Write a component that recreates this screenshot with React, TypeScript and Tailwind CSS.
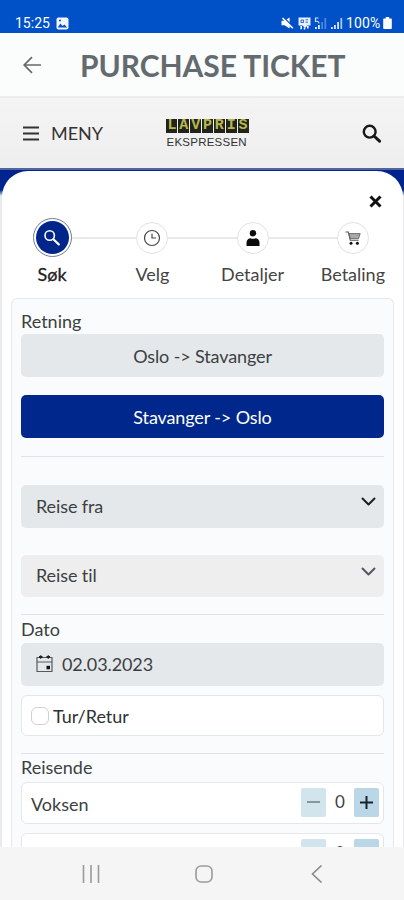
import { useState } from 'react';

const STEPS = [
  { label: 'Søk', icon: SearchIcon },
  { label: 'Velg', icon: ClockIcon },
  { label: 'Detaljer', icon: PersonIcon },
  { label: 'Betaling', icon: CartIcon }
];

const DIRECTIONS = ['Oslo -> Stavanger', 'Stavanger -> Oslo'];

function SearchIcon() {
  return (
    <svg width="18" height="18" viewBox="0 0 18 18" fill="none" stroke="#fff">
      <circle cx="6.7" cy="6.5" r="4.7" strokeWidth="1.6" />
      <path d="M10.4 10.2l5.4 5.2" strokeWidth="2.2" strokeLinecap="round" />
    </svg>
  );
}

function ClockIcon() {
  return (
    <svg width="18" height="18" viewBox="0 0 18 18" fill="none" stroke="#444">
      <circle cx="9" cy="9" r="7.5" strokeWidth="1.2" />
      <path d="M9 4.8V9h4" strokeWidth="1.2" />
    </svg>
  );
}

function PersonIcon() {
  return (
    <svg width="16" height="18" viewBox="0 0 16 18" fill="#0c0c0c">
      <circle cx="8" cy="4.2" r="3.2" />
      <path d="M1.5 17v-3.2c0-3 2-4.6 4-4.6 1.6.7 3.4.7 5 0 2 0 4 1.6 4 4.6V17z" />
    </svg>
  );
}

function CartIcon() {
  return (
    <svg width="16" height="16" viewBox="0 0 16 16" fill="none" stroke="#555">
      <path d="M.5 2h2.8l2 8.3h8.2" strokeWidth="1.1" />
      <path d="M4 3.6h11.2l-1.7 5H5.2z" strokeWidth=".8" fill="#aaa" />
      <circle cx="6" cy="13.2" r="1.5" fill="#111" stroke="none" />
      <circle cx="12.4" cy="13.2" r="1.5" fill="#111" stroke="none" />
    </svg>
  );
}

function StatusBar() {
  return (
    <div className="flex h-[33px] shrink-0 items-end justify-between bg-[#0050c8] pr-3 pb-[3px] pl-[15px] font-[Roboto,sans-serif] text-[14px] leading-[14px] text-white">
      <div className="flex h-[14px] items-center gap-[5px]">
        <span className="w-9">15:25</span>
        <svg width="13" height="13" viewBox="0 0 13 13">
          <rect x=".5" y=".5" width="12" height="12" rx="2" fill="#f2f6ff" />
          <path d="M1.8 10.5l2.6-4 2.2 2.6 1.8-1.6 2.8 3z" fill="#0050c8" />
          <circle cx="4" cy="3.6" r="1" fill="#0050c8" />
        </svg>
      </div>
      <div className="flex h-[14px] items-center">
        <svg width="13" height="12" viewBox="0 0 13 12">
          <path d="M.5 3.700h3L8.600.5v11L3.500 8.300h-3z" fill="#fff" />
          <path d="M2.500.3l10 10" stroke="#0050c8" strokeWidth="1.400" />
          <path d="M1.500 1l10.300 10.300" stroke="#fff" strokeWidth="1.600" />
        </svg>
        <svg className="ml-[4px]" width="13" height="13" viewBox="0 0 13 13">
          <path d="M.5.5h12V8.500H9.500L7 11 4.500 8.500h-4z" fill="#e8f0ff" />
          <path d="M3 3h2.500v2.500H3zM7.500 2.800H10M7.500 5.200H10" stroke="#0050c8" strokeWidth=".8" fill="none" />
          <path d="M3.200 9v3.200M9.800 9v2.500M6.500 10.500v2" stroke="#fff" strokeWidth="1.600" />
        </svg>
        <svg className="ml-[3px]" width="13" height="12" viewBox="0 0 13 12">
          <path d="M4.500 1H1.500v3.500c2.500-.8 3.500.5 3.200 2" stroke="#cfe0fb" strokeWidth="1.200" fill="none" />
          <path d="M1 10h1.800v2H1zM4 8h1.800v4H4z" fill="#e5eeff" />
          <path d="M7.200 5H9v7H7.200zM10.400 1h1.800v11h-1.800z" fill="#4c86dc" />
        </svg>
        <svg className="ml-[3px]" width="13" height="12" viewBox="0 0 13 12">
          <path d="M1 10h1.800v2H1zM4 8h1.800v4H4zM7.200 5H9v7H7.200z" fill="#dce8ff" />
          <path d="M10.400 1h1.800v11h-1.800z" fill="#a9c6f2" />
        </svg>
        <span className="ml-[3px] w-[37px] text-[14px] tracking-[0.100px]">100%</span>
        <svg width="9" height="12" viewBox="0 0 9 12" fill="#fff">
          <path d="M2.800 0h3.400v1.400H8a.8.8 0 0 1 .8.8v9a.8.8 0 0 1-.8.800H1a.8.8 0 0 1-.8-.8v-9a.8.8 0 0 1 .8-.8h1.800z" />
        </svg>
      </div>
    </div>
  );
}

function Logo() {
  return (
    <div className="w-[82px]">
      <div className="flex gap-px">
        {'LAVPRIS'.split('').map((letter, i) => (
          <span
            key={i}
            className="flex h-[14px] min-w-0 flex-1 items-center justify-center bg-[#22231b] font-['Liberation_Mono',monospace] text-[15px] leading-[14px] font-bold text-[#b5b650]"
          >
            {letter}
          </span>
        ))}
      </div>
      <div className="mt-[3px] font-['Liberation_Sans',sans-serif] text-[11.5px] leading-[12px] tracking-[0.240px] whitespace-nowrap text-[#333]">
        EKSPRESSEN
      </div>
    </div>
  );
}

function Steps() {
  return (
    <div className="relative mt-[6px] h-[83px]">
      <div className="absolute top-[22px] right-[50px] left-[50px] h-[2px] bg-[#e9e9eb]" />
      <div className="relative grid grid-cols-4">
        {STEPS.map(({ label, icon: Icon }, i) => (
          <div key={label} className="flex flex-col items-center">
            <div className="flex h-[45px] items-center justify-center">
              {i === 0 ? (
                <div className="flex size-[39px] items-center justify-center rounded-full border border-[#6c7c9c] bg-white">
                  <div className="flex size-[33px] items-center justify-center rounded-full bg-[#00268c]">
                    <Icon />
                  </div>
                </div>
              ) : (
                <div className="flex size-[32px] items-center justify-center rounded-full border border-[#e2e2e4] bg-white">
                  <Icon />
                </div>
              )}
            </div>
            <span className={`mt-[3px] text-[18px] leading-[22px] ${i === 0 ? 'text-[#222] [-webkit-text-stroke:0.3px_#222]' : 'text-[#444]'}`}>
              {label}
            </span>
          </div>
        ))}
      </div>
    </div>
  );
}

function Chevron({ color }: { color: string }) {
  return (
    <svg className="mb-[7px]" width="15" height="10" viewBox="0 0 15 10" fill="none" stroke={color} strokeWidth="2">
      <path d="M1.500 1.500l6 6 6-6" strokeLinecap="round" strokeLinejoin="round" />
    </svg>
  );
}

function PassengerRow({ label }: { label: string }) {
  const [count, setCount] = useState(0);

  return (
    <div className="flex h-[42px] shrink-0 items-center rounded-md border border-[#e4e7ea] bg-white pr-[4px] pl-[9px]">
      <span className="flex-1 pt-[2px]">{label}</span>
      <div className="mb-[2px] flex items-center">
        <button
          onClick={() => setCount(Math.max(0, count - 1))}
          className="flex h-[29px] w-[25px] items-center justify-center rounded-xs bg-[#d3e5ec]"
        >
          <span className="h-[2px] w-[13px] bg-[#84979f]" />
        </button>
        <span className="w-[28px] pb-px text-center text-[17px]">{count}</span>
        <button
          onClick={() => setCount(count + 1)}
          className="flex h-[29px] w-[25px] items-center justify-center rounded-xs bg-[#bbd6e6]"
        >
          <svg width="13" height="13" viewBox="0 0 13 13" stroke="#17242c" strokeWidth="2">
            <path d="M0 6.500h13M6.500 0v13" />
          </svg>
        </button>
      </div>
    </div>
  );
}

export default function App() {
  const [direction, setDirection] = useState(DIRECTIONS[1]);
  const [roundTrip, setRoundTrip] = useState(false);

  return (
    <div className="flex h-[900px] w-[404px] flex-col overflow-hidden bg-[#f5f5f5] font-[Lato,sans-serif] text-[18px] leading-[22px] text-[#3c3f42] [font-variant-ligatures:none]">
      <StatusBar />

      <header className="flex h-[65px] shrink-0 items-center border-b-2 border-[#ececec] bg-[#fbfcfc] pl-[23px]">
        <svg width="18" height="18" viewBox="0 0 18 18" fill="none" stroke="#646a6d" strokeWidth="1.700">
          <path d="M18 9H1.500M9 1.200L1.200 9 9 16.800" />
        </svg>
        <h1 className="ml-[39px] text-[30px] leading-[34px] font-bold tracking-[-0.050px] whitespace-nowrap text-[#646b6f]">
          PURCHASE TICKET
        </h1>
      </header>

      <nav className="grid h-[72px] shrink-0 grid-cols-3 items-center border-b-2 border-[#53659d] bg-linear-to-b from-[#f4f4f4] to-[#eeeeee] px-[23px]">
        <div className="flex items-center">
          <svg width="16" height="15" viewBox="0 0 16 15" fill="#333">
            <path d="M0 .5h16v2H0zM0 6.500h16v2H0zM0 12.500h16v2H0z" />
          </svg>
          <span className="ml-[12px] text-[18px] text-[#333]">MENY</span>
        </div>
        <div className="flex justify-center pl-[11px]">
          <Logo />
        </div>
        <svg className="justify-self-end" width="19" height="19" viewBox="0 0 19 19" fill="none" stroke="#181818">
          <circle cx="7.700" cy="7.700" r="5.900" strokeWidth="2.400" />
          <path d="M12 12l5.500 5.200" strokeWidth="3" strokeLinecap="round" />
        </svg>
      </nav>

      <div className="h-[677px] shrink-0 overflow-hidden bg-linear-to-b from-[#00248e] from-[20px] to-[#e9ebef] to-[26px] pt-px pr-px pl-[2px]">
        <main className="flex h-full flex-col rounded-t-[26px] bg-white pt-[24px]">
          <button className="mr-[21px] self-end">
            <svg width="13" height="13" viewBox="0 0 13 13" stroke="#111" strokeWidth="3">
              <path d="M1.500 1.500l10 10M11.500 1.500l-10 10" />
            </svg>
          </button>

          <div className="pt-px">
            <Steps />
          </div>

          <section className="mr-[9px] ml-[9px] flex min-h-0 flex-1 flex-col rounded-t-md border border-b-0 border-[#e5e7e9] bg-[#f9fbfc] px-[9px] pt-[11px]">
            <label>Retning</label>
            {DIRECTIONS.map(item => (
              <button
                key={item}
                onClick={() => setDirection(item)}
                className={`h-[43px] shrink-0 rounded-[5px] tracking-[-0.120px] first-of-type:mt-[2px] not-first-of-type:mt-[18px] ${
                  item === direction ? 'bg-[#00288c] text-white' : 'bg-[#e4e8eb]'
                }`}
              >
                {item}
              </button>
            ))}
            <hr className="mt-[18px] border-[#dde3e8]" />

            <div className="mt-[28px] flex h-[43px] shrink-0 items-center justify-between rounded-[5px] bg-[#e4e8eb] pr-[8px] pb-[2px] pl-[15px] tracking-[-0.100px]">
              Reise fra
              <Chevron color="#1d2022" />
            </div>
            <div className="mt-[27px] flex h-[42px] shrink-0 items-center justify-between rounded-[5px] bg-[#eeeeee] pr-[8px] pb-[2px] pl-[15px] tracking-[-0.100px]">
              Reise til
              <Chevron color="#55585a" />
            </div>

            <hr className="mt-[17px] border-[#dde3e8]" />
            <label className="mt-[3px]">Dato</label>
            <div className="mt-[3px] flex h-[43px] shrink-0 items-center rounded-[5px] bg-[#e4e8eb] pb-px pl-[15px]">
              <svg width="17" height="18" viewBox="0 0 17 18" fill="none" stroke="#555a5e" strokeWidth="1.200">
                <path d="M1 2.500h15v14H1zM1 7h15" />
                <path d="M3 2h3.500M10.500 2H14" stroke="#222" strokeWidth="2" />
                <path d="M4.700.3v3.500M12.300.3v3.500" stroke="#222" />
                <path d="M10.500 10.800h3.500v3.500h-3.500z" fill="#111" stroke="none" />
              </svg>
              <span className="ml-[9px] tracking-[-0.100px]">02.03.2023</span>
            </div>

            <label className="mt-[9px] flex h-[41px] shrink-0 items-center gap-[4px] rounded-md border border-[#e2e7ec] bg-white pl-[9px] text-[#2f3133]">
              <input
                type="checkbox"
                checked={roundTrip}
                onChange={e => setRoundTrip(e.target.checked)}
                className="size-[18px] appearance-none rounded-[6px] border border-[#cfd1d3] bg-white checked:bg-[#00288c]"
              />
              Tur/Retur
            </label>

            <hr className="mt-[17px] border-[#dde3e8]" />
            <label className="mt-[2px]">Reisende</label>
            <div className="mt-[4px] flex flex-col gap-[9px]">
              <PassengerRow label="Voksen" />
              <PassengerRow label="Barn" />
            </div>
          </section>
        </main>
      </div>

      <footer className="flex h-[53px] shrink-0 items-center justify-between bg-[#f5f5f5] pr-[81px] pl-[82px]">
        <svg width="18" height="18" viewBox="0 0 18 18" stroke="#9a9a9a" strokeWidth="1.600">
          <path d="M1.500 0v18M9 0v18M16.500 0v18" />
        </svg>
        <svg className="mr-[4px]" width="18" height="18" viewBox="0 0 18 18" fill="none" stroke="#9a9a9a" strokeWidth="1.600">
          <rect x="1" y="1" width="16" height="16" rx="5" />
        </svg>
        <svg width="12" height="18" viewBox="0 0 12 18" fill="none" stroke="#8a8a8a" strokeWidth="1.600">
          <path d="M10.500.5L1.500 9l9 8.500" />
        </svg>
      </footer>
    </div>
  );
}
